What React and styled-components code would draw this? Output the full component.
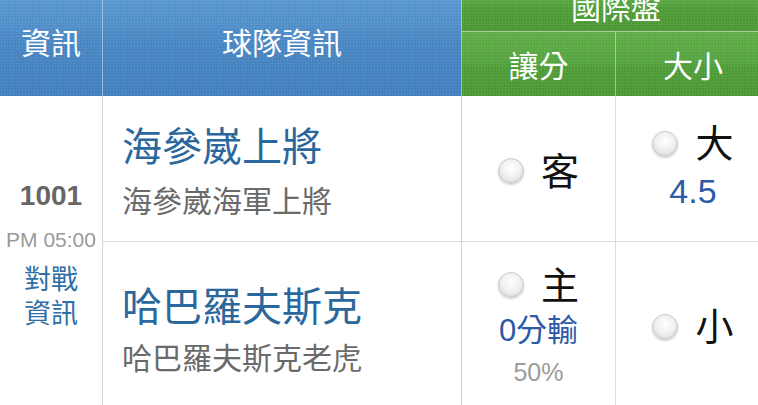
import React from 'react';
import styled, { createGlobalStyle, css } from 'styled-components';

const GlobalStyle = createGlobalStyle`
  html, body {
    margin: 0;
    padding: 0;
    background: #ffffff;
  }
  body {
    font-family: "Liberation Sans", "Noto Sans CJK TC", sans-serif;
  }
`;

const dots = css`
  background-image:
    radial-gradient(rgba(255, 255, 255, 0.07) 1px, transparent 1.2px),
    ${({ $tone }) => ($tone === 'green'
      ? 'linear-gradient(#5cab44 0%, #53a33c 45%, #4c9b35 55%, #489631 100%)'
      : 'linear-gradient(#5a99d2 0%, #4d8cc8 40%, #4583c1 55%, #3f7dbd 100%)')};
  background-size: 3px 3px, 100% 100%;
`;

const Page = styled.div`
  width: 758px;
  height: 405px;
  overflow: hidden;
  background: #fff;
`;

const Table = styled.div`
  display: grid;
  grid-template-columns: 103px 359px 154px 154px;
  grid-template-rows: 51px 64px 146px 164px;
  width: 770px;
  margin-top: -19px;
`;

const BlueHead = styled.div`
  ${dots};
  grid-row: 1 / 3;
  box-sizing: border-box;
  border-right: 1px solid rgba(255, 255, 255, 0.45);
  display: flex;
  align-items: center;
  justify-content: center;
  padding-top: 4px;
  color: #fff;
  font-family: "Noto Sans CJK TC", sans-serif;
  font-size: 30px;
`;

const GroupHead = styled.div`
  ${dots};
  grid-column: 3 / 5;
  grid-row: 1;
  box-sizing: border-box;
  border-bottom: 1px solid rgba(255, 255, 255, 0.45);
  display: flex;
  align-items: center;
  justify-content: center;
  color: #fff;
  font-family: "Noto Sans CJK TC", sans-serif;
  font-size: 30px;
`;

const SubHead = styled.div`
  ${dots};
  grid-row: 2;
  box-sizing: border-box;
  border-right: ${({ $last }) => ($last ? 'none' : '1px solid rgba(255, 255, 255, 0.45)')};
  display: flex;
  align-items: center;
  justify-content: center;
  color: #fff;
  font-family: "Noto Sans CJK TC", sans-serif;
  font-size: 30px;
`;

const InfoCell = styled.div`
  grid-column: 1;
  grid-row: 3 / 5;
  box-sizing: border-box;
  border-right: 1px solid #d4d4d4;
  display: flex;
  flex-direction: column;
  align-items: center;
  padding-top: 84px;
`;

const GameNo = styled.div`
  font-size: 28px;
  font-weight: bold;
  line-height: 32px;
  color: #666;
`;

const GameTime = styled.div`
  margin-top: 16px;
  font-size: 21px;
  line-height: 24px;
  color: #9a9a9a;
  white-space: nowrap;
`;

const VsLink = styled.div`
  margin-top: ${({ $gap }) => $gap}px;
  font-family: "Noto Sans CJK TC", sans-serif;
  font-size: 27px;
  line-height: 30px;
  color: #2f6ea6;
`;

const TeamCell = styled.div`
  grid-column: 2;
  box-sizing: border-box;
  border-right: 1px solid #d4d4d4;
  border-bottom: ${({ $first }) => ($first ? '1px solid #dcdcdc' : 'none')};
  display: flex;
  flex-direction: column;
  padding: ${({ $top }) => $top}px 0 0 19px;
  gap: ${({ $gap }) => $gap}px;
`;

const TeamName = styled.div`
  font-family: "Noto Sans CJK TC", sans-serif;
  font-size: 40px;
  line-height: 44px;
  color: #2a679c;
`;

const TeamFull = styled.div`
  font-family: "Noto Sans CJK TC", sans-serif;
  font-size: 30px;
  line-height: 36px;
  color: #6a6a6a;
`;

const BetCell = styled.div`
  box-sizing: border-box;
  border-right: ${({ $last }) => ($last ? 'none' : '1px solid #dcdcdc')};
  border-bottom: ${({ $first }) => ($first ? '1px solid #dcdcdc' : 'none')};
  display: flex;
  flex-direction: column;
  align-items: center;
  justify-content: center;
  padding-bottom: ${({ $lift }) => $lift || 0}px;
`;

const Option = styled.div`
  display: flex;
  align-items: center;
  gap: 17px;
`;

const Radio = styled.span`
  display: inline-block;
  box-sizing: border-box;
  width: 26px;
  height: 26px;
  border-radius: 50%;
  border: 1px solid #c9c9c9;
  background: radial-gradient(circle at 50% 38%, #ffffff 0%, #f1f1f1 45%, #d6d6d6 100%);
  box-shadow: 0 1px 2px rgba(0, 0, 0, 0.18), inset 0 -1px 2px rgba(0, 0, 0, 0.08);
  margin-top: 5px;
`;

const Pick = styled.span`
  font-family: "Noto Sans CJK TC", sans-serif;
  font-size: 38px;
  line-height: 40px;
  color: #111;
`;

const Odds = styled.div`
  margin-top: ${({ $gap }) => $gap}px;
  font-family: "Liberation Sans", "Noto Sans CJK TC", sans-serif;
  font-size: ${({ $size }) => $size}px;
  line-height: ${({ $size }) => $size + 3}px;
  color: #2c5aa6;
`;

const Percent = styled.div`
  margin-top: 10px;
  font-size: 25px;
  line-height: 28px;
  color: #9c9c9c;
`;

const App = () => {
  return (
    <Page>
      <GlobalStyle />
      <Table>
        <BlueHead style={{ gridColumn: 1 }}>資訊</BlueHead>
        <BlueHead style={{ gridColumn: 2 }}>球隊資訊</BlueHead>
        <GroupHead $tone="green">國際盤</GroupHead>
        <SubHead $tone="green" style={{ gridColumn: 3 }}>讓分</SubHead>
        <SubHead $tone="green" $last style={{ gridColumn: 4 }}>大小</SubHead>

        <InfoCell>
          <GameNo>1001</GameNo>
          <GameTime>PM 05:00</GameTime>
          <VsLink $gap={11}>對戰</VsLink>
          <VsLink $gap={4}>資訊</VsLink>
        </InfoCell>

        {/* 客隊 */}
        <TeamCell $first $top={26} $gap={15} style={{ gridRow: 3 }}>
          <TeamName>海參崴上將</TeamName>
          <TeamFull>海參崴海軍上將</TeamFull>
        </TeamCell>
        <BetCell $first style={{ gridColumn: 3, gridRow: 3 }}>
          <Option><Radio /><Pick>客</Pick></Option>
        </BetCell>
        <BetCell $first $last $lift={6} style={{ gridColumn: 4, gridRow: 3 }}>
          <Option><Radio /><Pick>大</Pick></Option>
          <Odds $gap={12} $size={34}>4.5</Odds>
        </BetCell>

        {/* 主隊 */}
        <TeamCell $top={40} $gap={12} style={{ gridRow: 4 }}>
          <TeamName>哈巴羅夫斯克</TeamName>
          <TeamFull>哈巴羅夫斯克老虎</TeamFull>
        </TeamCell>
        <BetCell style={{ gridColumn: 3, gridRow: 4 }}>
          <Option><Radio /><Pick>主</Pick></Option>
          <Odds $gap={11} $size={31}>0分輸</Odds>
          <Percent>50%</Percent>
        </BetCell>
        <BetCell $last style={{ gridColumn: 4, gridRow: 4 }}>
          <Option><Radio /><Pick>小</Pick></Option>
        </BetCell>
      </Table>
    </Page>
  );
};

export default App;
